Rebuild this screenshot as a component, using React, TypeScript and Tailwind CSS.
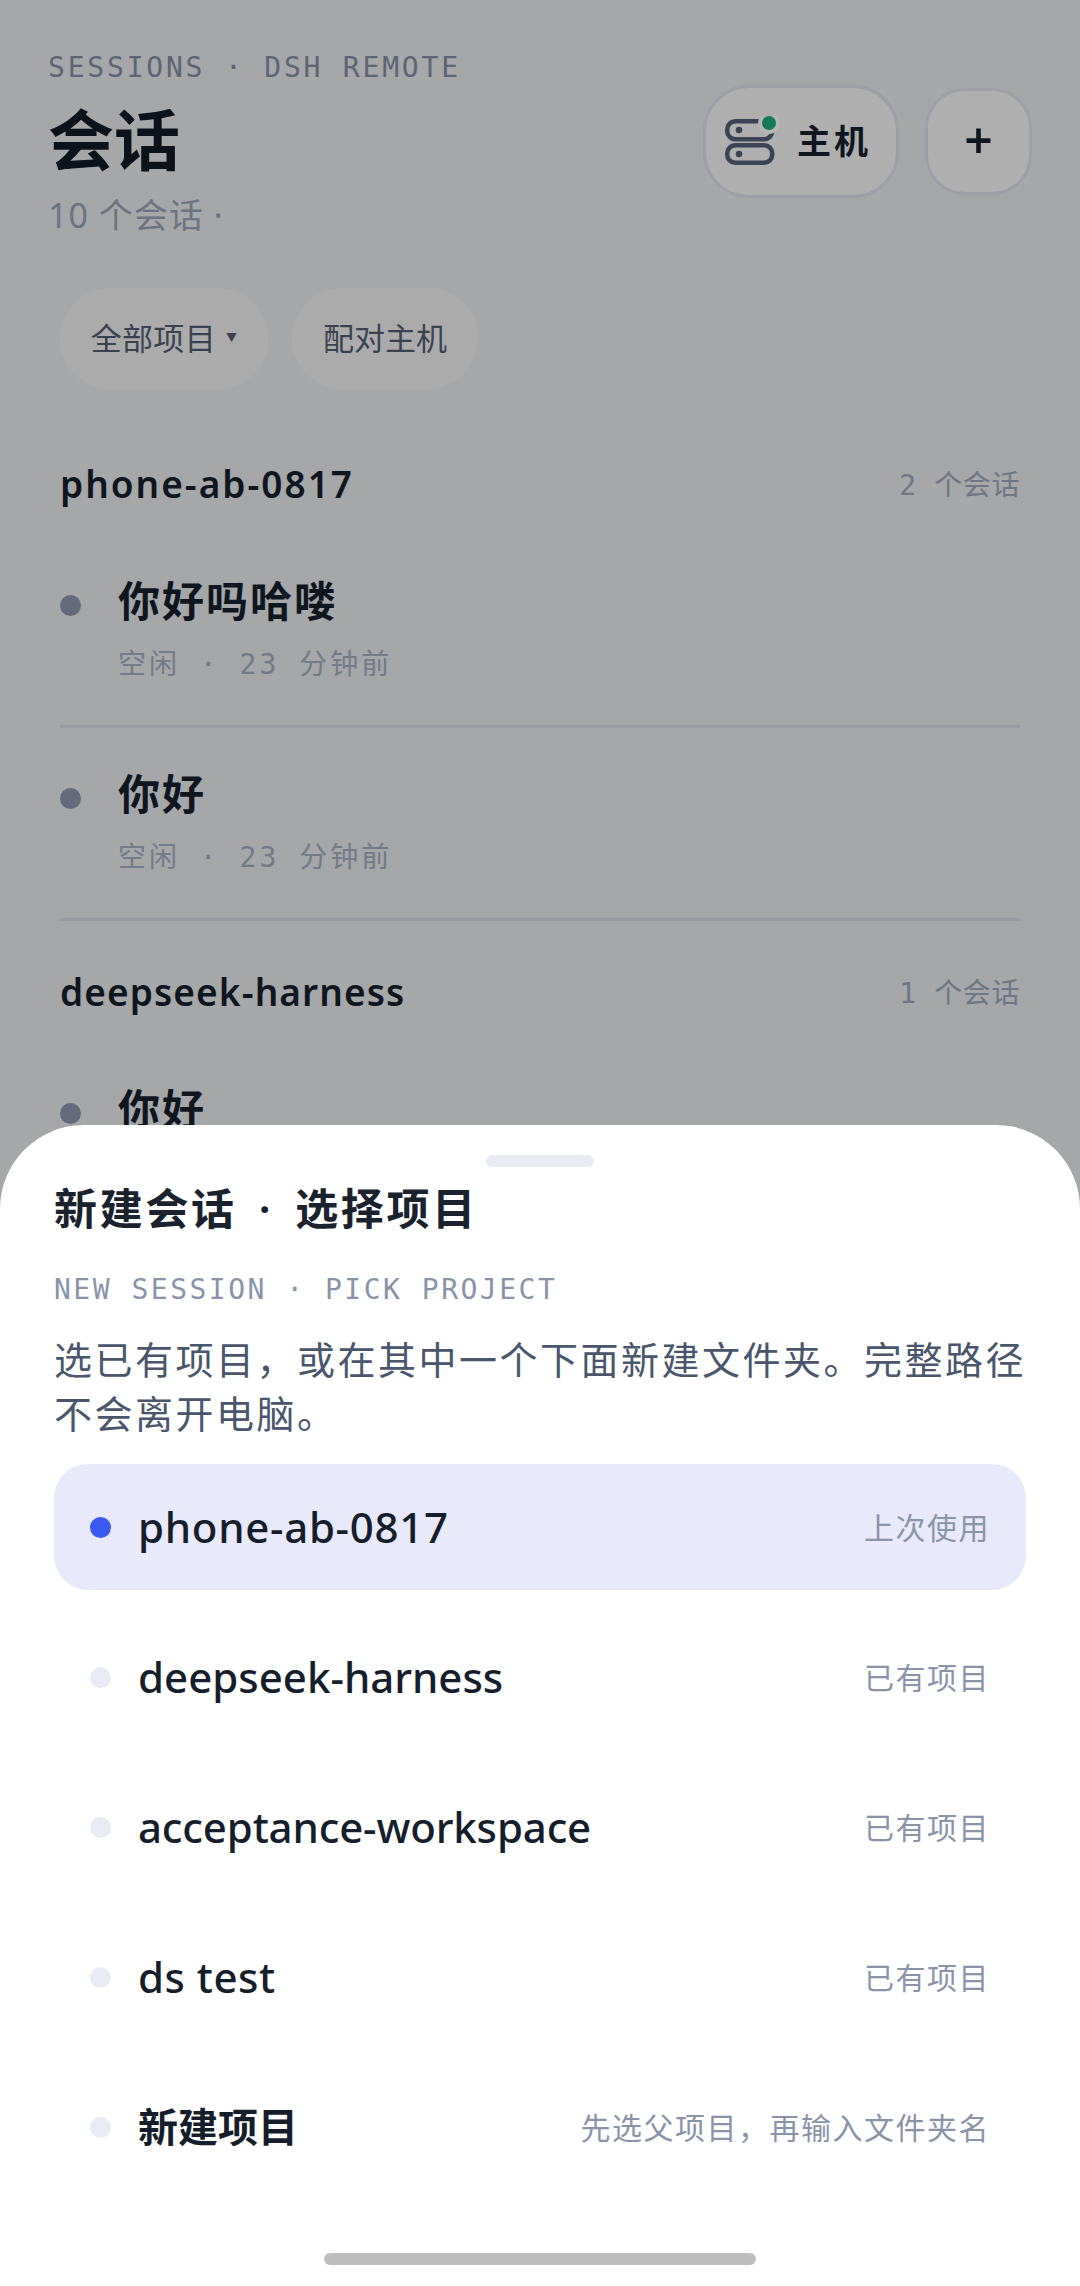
const sans = "font-['Noto_Sans','Noto_Sans_CJK_SC',sans-serif]";
const mono = "font-['DejaVu_Sans_Mono','Noto_Sans_CJK_SC',monospace]";

function HostIcon() {
  return (
    <svg viewBox="0 0 56 52" className="h-[52px] w-[56px] shrink-0" fill="none">
      <rect x="3.25" y="5.25" width="45" height="18" rx="8" stroke="#3b4354" strokeWidth="4.5" />
      <rect x="3.25" y="29.25" width="45" height="17.5" rx="8" stroke="#3b4354" strokeWidth="4.5" />
      <circle cx="15" cy="14" r="3.3" fill="#3b4354" />
      <circle cx="15" cy="38" r="3.3" fill="#3b4354" />
      <circle cx="45" cy="7" r="11" fill="#b5b5b6" />
      <circle cx="45" cy="7" r="7" fill="#137a55" />
    </svg>
  );
}

function SessionRow({ title, divider }: { title: string; divider?: boolean }) {
  return (
    <div className={`h-[193px] pt-[36px] ${divider ? "border-b-[3px] border-[#9a9ba3]" : ""}`}>
      <div className="flex items-center gap-[37px]">
        <span className="mt-[8px] h-[21px] w-[21px] shrink-0 rounded-full bg-[#646b7c]" />
        <span className="text-[42px] font-semibold leading-[60px] tracking-[2px] text-[#0f161f]">{title}</span>
      </div>
      <div className={`ml-[58px] mt-[14px] text-[28px] leading-[40px] tracking-[3px] text-[#737a88] ${mono}`}>
        空闲 · 23 分钟前
      </div>
    </div>
  );
}

function GroupHead({ name, count, spacing }: { name: string; count: string; spacing: string }) {
  return (
    <div className="flex h-[54px] items-center justify-between">
      <span className={`text-[37px] font-semibold text-[#0f161f] ${spacing}`}>{name}</span>
      <span className={`mt-[3px] text-[28px] tracking-[0.6px] text-[#6f7684] ${mono}`}>{count}</span>
    </div>
  );
}

function ProjectRow({ name, note, active, bold, spacing }: { name: string; note: string; active?: boolean; bold?: boolean; spacing?: string }) {
  return (
    <div className={`flex h-[126px] items-center justify-between rounded-[34px] pl-[36px] pr-[36px] ${active ? "bg-[#e8eafc]" : ""}`}>
      <div className="flex items-center gap-[27px]">
        <span className={`h-[21px] w-[21px] rounded-full ${active ? "bg-[#3b5bf0]" : "bg-[#e9ecf4]"}`} />
        <span className={`leading-[60px] text-[#161e2b] ${bold ? "text-[40px] font-semibold" : "text-[42px] font-medium"} ${spacing ?? ""}`}>{name}</span>
      </div>
      <span className="text-[30px] tracking-[1.5px] text-[#8a94a9]">{note}</span>
    </div>
  );
}

export default function App() {
  return (
    <div className={`relative h-[2286px] w-[1080px] overflow-hidden bg-[#a6a7a9] ${sans}`}>
      <div className="pl-[48px] pr-[48px] pt-[51px]">
        <div className={`text-[28px] leading-[34px] tracking-[2.8px] text-[#5d6475] ${mono}`}>SESSIONS · DSH REMOTE</div>
        <div className="flex items-start justify-between">
          <div>
            <h1 className="mt-[9px] text-[66px] font-bold leading-[90px] text-[#0c1219]">会话</h1>
            <p className="mt-[8px] text-[34px] leading-[46px] tracking-[1px] text-[#6c7382]">10 个会话 ·</p>
          </div>
          <div className="flex items-center gap-[26px]">
            <button className="flex h-[113px] w-[196px] items-center justify-center gap-[17px] rounded-[46px] border-[3px] border-[#9e9fa7] bg-[#afafaf] pr-[7px]">
              <HostIcon />
              <span className="text-[34px] font-semibold tracking-[3px] text-[#0f161f]">主机</span>
            </button>
            <button className="flex h-[107px] w-[107px] items-center justify-center rounded-[40px] border-[3px] border-[#9e9fa7] bg-[#afafaf] pb-[4px] text-[50px] font-semibold leading-none text-[#0f161f]">
              +
            </button>
          </div>
        </div>
      </div>

      <div className="ml-[60px] mt-[50px] flex gap-[24px]">
        <div className="flex h-[101px] w-[208px] items-center justify-center gap-[10px] rounded-[50px] bg-[#ababab] text-[31px] tracking-[0.3px] text-[#3a4252]">
          全部项目 <span className="text-[11px]">▼</span>
        </div>
        <div className="flex h-[101px] w-[186px] items-center justify-center rounded-[50px] bg-[#ababab] text-[31px] text-[#3a4252]">配对主机</div>
      </div>

      <div className="mx-[60px] mt-[68px]">
        <GroupHead name="phone-ab-0817" count="2 个会话" spacing="tracking-[2px]" />
        <div className="mt-[24px]">
          <SessionRow title="你好吗哈喽" divider />
          <SessionRow title="你好" divider />
        </div>
        <div className="mt-[44px]">
          <GroupHead name="deepseek-harness" count="1 个会话" spacing="tracking-[1.1px]" />
        </div>
        <div className="mt-[24px]">
          <SessionRow title="你好" />
        </div>
      </div>

      <div className="absolute inset-x-0 bottom-0 h-[1161px] rounded-t-[84px] bg-white px-[54px] pt-[30px]">
        <div className="mx-auto h-[12px] w-[108px] rounded-full bg-[#e9ecf3]" />
        <h2 className="mt-[12px] text-[43px] font-semibold leading-[60px] tracking-[2.7px] text-[#1a222e] [word-spacing:8px]">新建会话 · 选择项目</h2>
        <div className={`mt-[33px] text-[28px] leading-[36px] tracking-[2.5px] text-[#8a94a9] ${mono}`}>NEW SESSION · PICK PROJECT</div>
        <p className="mt-[24px] text-[38px] leading-[54px] tracking-[2.5px] text-[#4a566b]">
          选已有项目，或在其中一个下面新建文件夹。完整路径不会离开电脑。
        </p>
        <div className="mt-[24px] flex flex-col gap-[24px]">
          <ProjectRow name="phone-ab-0817" note="上次使用" active spacing="tracking-[0.7px]" />
          <ProjectRow name="deepseek-harness" note="已有项目" />
          <ProjectRow name="acceptance-workspace" note="已有项目" spacing="tracking-[-0.15px]" />
          <ProjectRow name="ds test" note="已有项目" spacing="tracking-[0.5px]" />
          <ProjectRow name="新建项目" note="先选父项目，再输入文件夹名" bold />
        </div>
        <div className="absolute bottom-[21px] left-[324px] h-[12px] w-[432px] rounded-full bg-[#bebebe]" />
      </div>
    </div>
  );
}
